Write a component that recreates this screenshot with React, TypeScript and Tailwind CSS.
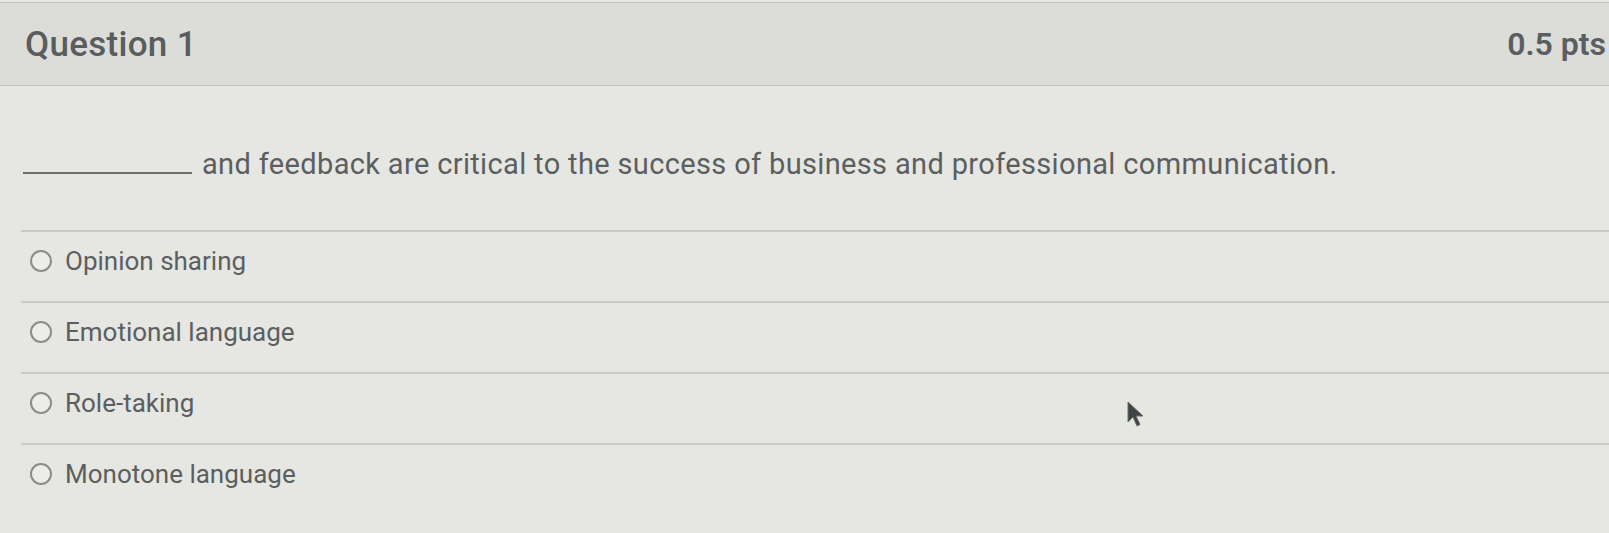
const options = [
  "Opinion sharing",
  "Emotional language",
  "Role-taking",
  "Monotone language",
];

function Cursor() {
  return (
    <svg
      className="absolute left-[1126px] top-[400px]"
      width="20"
      height="30"
      viewBox="0 0 20 30"
    >
      <path
        d="M2 2 L2 22 L7 17 L11 26 L14 24.5 L10 16 L17 16 Z"
        fill="#3d4244"
        stroke="#6a6f70"
        strokeWidth="1"
        strokeLinejoin="round"
      />
    </svg>
  );
}

export default function App() {
  return (
    <div className="relative h-[533px] w-full overflow-hidden bg-[#e6e6e3] font-['Roboto',sans-serif] text-[#5b5f60]">
      {/* header */}
      <div className="mt-[2px] flex h-[84px] items-center justify-between border-y border-[#c4c4c1] bg-[#dcdcd9] pl-[25px] pr-[3px]">
        <h2 className="text-[35px] font-medium leading-none tracking-[0.3px] text-[#595d5e]">Question 1</h2>
        <span className="text-[32px] font-semibold leading-none text-[#5a5e60]">0.5 pts</span>
      </div>

      {/* question */}
      <div className="pb-[52px] pl-[23px] pt-[64px] text-[29px] leading-[28px] tracking-[0.35px]">
        <span className="mr-[10px] inline-block h-[24px] w-[169px] border-b-2 border-[#6a6e6f] align-baseline" />
        and feedback are critical to the success of business and professional communication.
      </div>

      {/* options */}
      <div className="ml-[21px]">
        {options.map((o) => (
          <div
            key={o}
            className="flex h-[71px] items-start gap-[13px] border-t-2 border-[#cbcbc8] pl-[9px] pt-[15px]"
          >
            <span className="mt-[3px] h-[22px] w-[22px] shrink-0 rounded-full border-2 border-[#8a8d8d] bg-[#ecece9]" />
            <span className="text-[26px] leading-[28px]">{o}</span>
          </div>
        ))}
      </div>

      <Cursor />
    </div>
  );
}
